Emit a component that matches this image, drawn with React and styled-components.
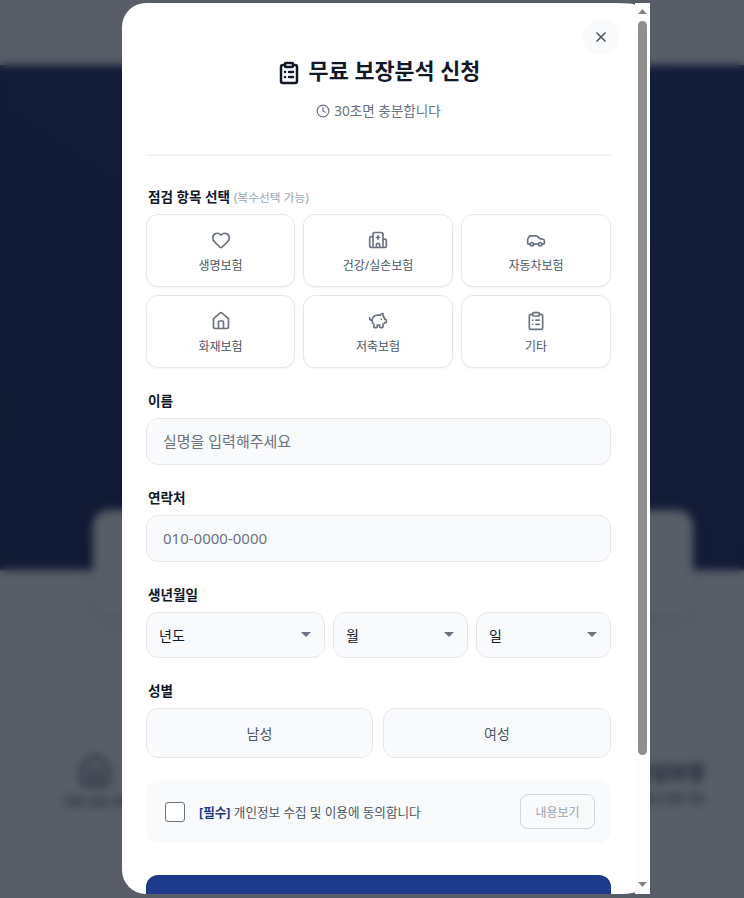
import React from "react";
import styled, { createGlobalStyle } from "styled-components";
import { Car, ClipboardList, Clock, Heart, Home, Hospital, PiggyBank, X } from "lucide-react";

const GlobalStyle = createGlobalStyle`
  * { box-sizing: border-box; }
  html, body { margin: 0; height: 100%; overflow: hidden; }
  body {
    background: #fff;
    font-family: "Noto Sans", "Noto Sans CJK KR", sans-serif;
    color: #111827;
  }
  input, select, button { font-family: inherit; }
`;

/* page behind the modal */
const Page = styled.div`
  height: 898px;
  overflow: hidden;
`;

const TopBar = styled.header`
  height: 65px;
  background: #fff;
`;

const Hero = styled.section`
  height: 505px;
  background: linear-gradient(to bottom left, #172a66, #122054);
`;

const StatCard = styled.div`
  width: 600px;
  height: 105px;
  margin: -60px 0 0 93px;
  background: #fff;
  border-radius: 16px;
  box-shadow: 0 8px 20px rgba(0, 0, 0, 0.1);
`;

const Features = styled.div`
  display: flex;
  justify-content: space-between;
  padding: 138px 39px 0 64px;
`;

const Feature = styled.div`
  display: flex;
  flex-direction: column;
  align-items: ${(props) => (props.$right ? "flex-end" : "flex-start")};
  gap: 4px;
  padding-top: ${(props) => (props.$right ? 4 : 0)}px;
  color: #374151;
  white-space: nowrap;
  svg { margin-left: 13px; color: #4b5563; }
`;

const FeatureTitle = styled.div`
  font-size: 20px;
  font-weight: 700;
`;

const FeatureText = styled.div`
  font-size: 11px;
  font-weight: 500;
`;

const Overlay = styled.div`
  position: fixed;
  inset: 0;
  display: flex;
  padding: 3px 94px 4px 122px;
  background: rgba(17, 24, 39, 0.7);
  backdrop-filter: blur(4px);
`;

/* modal */
const Modal = styled.div`
  flex: 1;
  display: flex;
  min-width: 0;
`;

const Panel = styled.div`
  position: relative;
  flex: 1;
  min-width: 0;
  overflow: hidden;
  padding: 47px 24px 0;
  background: #fff;
  border-radius: 24px 20px 20px 24px / 24px 2px 2px 24px;
`;

/* drawn scrollbar, same look as the classic one in the reference */
const ScrollRail = styled.div`
  display: flex;
  flex-direction: column;
  flex: 0 0 15px;
  background: #fdfdfd;
`;

const RailArrow = styled.div`
  display: flex;
  justify-content: center;
  flex: 0 0 15px;
  padding-top: ${(props) => (props.$down ? 3 : 6)}px;
  svg { display: block; }
`;

const RailTrack = styled.div`
  flex: 1;
  display: flex;
  justify-content: center;
  padding-top: 3px;
`;

const RailThumb = styled.div`
  width: 9px;
  height: 734px;
  background: #8f8f8f;
  border-radius: 5px;
`;

const CloseButton = styled.button`
  position: absolute;
  top: 16px;
  right: 16px;
  display: flex;
  align-items: center;
  justify-content: center;
  width: 36px;
  height: 36px;
  padding: 0;
  border: 0;
  border-radius: 50%;
  background: #f9fafb;
  color: #4b5563;
`;

const Header = styled.div`
  display: flex;
  flex-direction: column;
  align-items: center;
  height: 106px;
  border-bottom: 2px solid #f3f4f6;
`;

const Title = styled.h2`
  display: flex;
  align-items: center;
  gap: 8px;
  margin: 0;
  height: 38px;
  font-size: 21.8px;
  font-weight: 700;
  color: #111827;
  svg { margin-top: 8px; }
`;

const Subtitle = styled.p`
  display: flex;
  align-items: center;
  gap: 4px;
  margin: 13px 0 0;
  font-size: 13.6px;
  line-height: 20px;
  color: #6b7280;
`;

const Field = styled.div`
  margin-top: ${(props) => props.$top || 23}px;
`;

const Label = styled.div`
  margin-bottom: 7px;
  padding-left: 2px;
  font-size: 13.6px;
  line-height: 20px;
  font-weight: 700;
  color: #111827;
`;

const Hint = styled.span`
  margin-left: 4px;
  font-size: 11.7px;
  font-weight: 400;
  color: #9ca3af;
`;

const CategoryGrid = styled.div`
  display: grid;
  grid-template-columns: 149fr 150fr 150fr;
  gap: 8px;
`;

const Category = styled.button`
  display: flex;
  flex-direction: column;
  align-items: center;
  justify-content: center;
  gap: 8px;
  height: 73px;
  padding: 2px 0 0;
  background: #fff;
  border: 1px solid #e5e7eb;
  border-radius: 12px;
  box-shadow: 0 1px 2px rgba(0, 0, 0, 0.05);
  font-size: 12px;
  line-height: 16px;
  color: #4b5563;
  svg { color: #6b7280; }
`;

const TextInput = styled.input`
  display: block;
  width: 100%;
  height: 47px;
  padding: 0 16px 2px;
  background: #f9fafb;
  border: 1px solid #e5e7eb;
  border-radius: 12px;
  font-size: 15px;
  color: #111827;
  &::placeholder { color: #6b7280; opacity: 1; }
`;

const BirthRow = styled.div`
  display: grid;
  grid-template-columns: 179fr 135fr 135fr;
  gap: 8px;
`;

const SelectWrap = styled.div`
  position: relative;
  &::after {
    content: "";
    position: absolute;
    top: 20px;
    right: 14px;
    border-style: solid;
    border-width: 5px 5px 0;
    border-color: #6b7280 transparent transparent;
    pointer-events: none;
  }
`;

const Select = styled.select`
  display: block;
  width: 100%;
  height: 46px;
  padding: 0 12px;
  appearance: none;
  background: #f9fafb;
  border: 1px solid #e5e7eb;
  border-radius: 12px;
  font-size: 14px;
  color: #111827;
`;

const GenderRow = styled.div`
  display: grid;
  grid-template-columns: 227fr 228fr;
  gap: 10px;
`;

const GenderButton = styled.button`
  height: 50px;
  padding: 0;
  background: #f9fafb;
  border: 1px solid #e5e7eb;
  border-radius: 12px;
  font-size: 14px;
  color: #4b5563;
`;

const Consent = styled.div`
  display: flex;
  align-items: center;
  height: 63px;
  margin-top: 22px;
  padding: 0 16px 0 19px;
  background: #f9fafb;
  border-radius: 12px;
`;

const Checkbox = styled.input`
  width: 20px;
  height: 20px;
  margin: 0 14px 0 0;
  appearance: none;
  background: #fff;
  border: 1px solid #6b7280;
  border-radius: 3px;
`;

const ConsentText = styled.span`
  flex: 1;
  font-size: 12.6px;
  color: #4b5563;
  b { color: #1e3a8a; font-weight: 700; }
`;

const ViewButton = styled.button`
  width: 75px;
  height: 35px;
  padding: 0;
  background: transparent;
  border: 1px solid #d1d5db;
  border-radius: 8px;
  font-size: 12px;
  color: #9ca3af;
`;

const SubmitButton = styled.button`
  display: block;
  width: 100%;
  height: 76px;
  margin-top: 32px;
  background: #1e3a8a;
  border: 0;
  border-radius: 12px;
  font-size: 18px;
  font-weight: 700;
  color: #fff;
`;

const categories = [
  { label: "생명보험", icon: Heart },
  { label: "건강/실손보험", icon: Hospital },
  { label: "자동차보험", icon: Car },
  { label: "화재보험", icon: Home },
  { label: "저축보험", icon: PiggyBank },
  { label: "기타", icon: ClipboardList },
];

const BirthSelect = ({ label }) => (
  <SelectWrap>
    <Select defaultValue="">
      <option value="">{label}</option>
    </Select>
  </SelectWrap>
);

export default function App() {
  return (
    <>
      <GlobalStyle />
      <Page>
        <TopBar />
        <Hero />
        <StatCard />
        <Features>
          <Feature>
            <Home size={36} />
            <FeatureText>전문 상담 서비스</FeatureText>
          </Feature>
          <Feature $right>
            <FeatureTitle>안심보장</FeatureTitle>
            <FeatureText>상담 신청 가능</FeatureText>
          </Feature>
        </Features>
      </Page>

      <Overlay>
        <Modal>
          <Panel>
            <CloseButton aria-label="닫기">
              <X size={16} strokeWidth={2.5} />
            </CloseButton>

            <Header>
              <Title>
                <ClipboardList size={24} strokeWidth={2.5} />
                무료 보장분석 신청
              </Title>
              <Subtitle>
                <Clock size={14} />
                30초면 충분합니다
              </Subtitle>
            </Header>

            <Field $top={31}>
              <Label>
                점검 항목 선택<Hint>(복수선택 가능)</Hint>
              </Label>
              <CategoryGrid>
                {categories.map(({ label, icon: Icon }) => (
                  <Category key={label}>
                    <Icon size={20} />
                    {label}
                  </Category>
                ))}
              </CategoryGrid>
            </Field>

            <Field>
              <Label>이름</Label>
              <TextInput placeholder="실명을 입력해주세요" />
            </Field>

            <Field>
              <Label>연락처</Label>
              <TextInput placeholder="010-0000-0000" />
            </Field>

            <Field>
              <Label>생년월일</Label>
              <BirthRow>
                <BirthSelect label="년도" />
                <BirthSelect label="월" />
                <BirthSelect label="일" />
              </BirthRow>
            </Field>

            <Field>
              <Label>성별</Label>
              <GenderRow>
                <GenderButton>남성</GenderButton>
                <GenderButton>여성</GenderButton>
              </GenderRow>
            </Field>

            <Consent>
              <Checkbox type="checkbox" />
              <ConsentText>
                <b>[필수]</b> 개인정보 수집 및 이용에 동의합니다
              </ConsentText>
              <ViewButton>내용보기</ViewButton>
            </Consent>

            <SubmitButton>무료 보장분석 신청하기</SubmitButton>
          </Panel>

          <ScrollRail>
            <RailArrow>
              <svg width="9" height="5"><polygon points="4.5,0 9,5 0,5" fill="#808080" /></svg>
            </RailArrow>
            <RailTrack>
              <RailThumb />
            </RailTrack>
            <RailArrow $down>
              <svg width="9" height="5"><polygon points="0,0 9,0 4.5,5" fill="#808080" /></svg>
            </RailArrow>
          </ScrollRail>
        </Modal>
      </Overlay>
    </>
  );
}
